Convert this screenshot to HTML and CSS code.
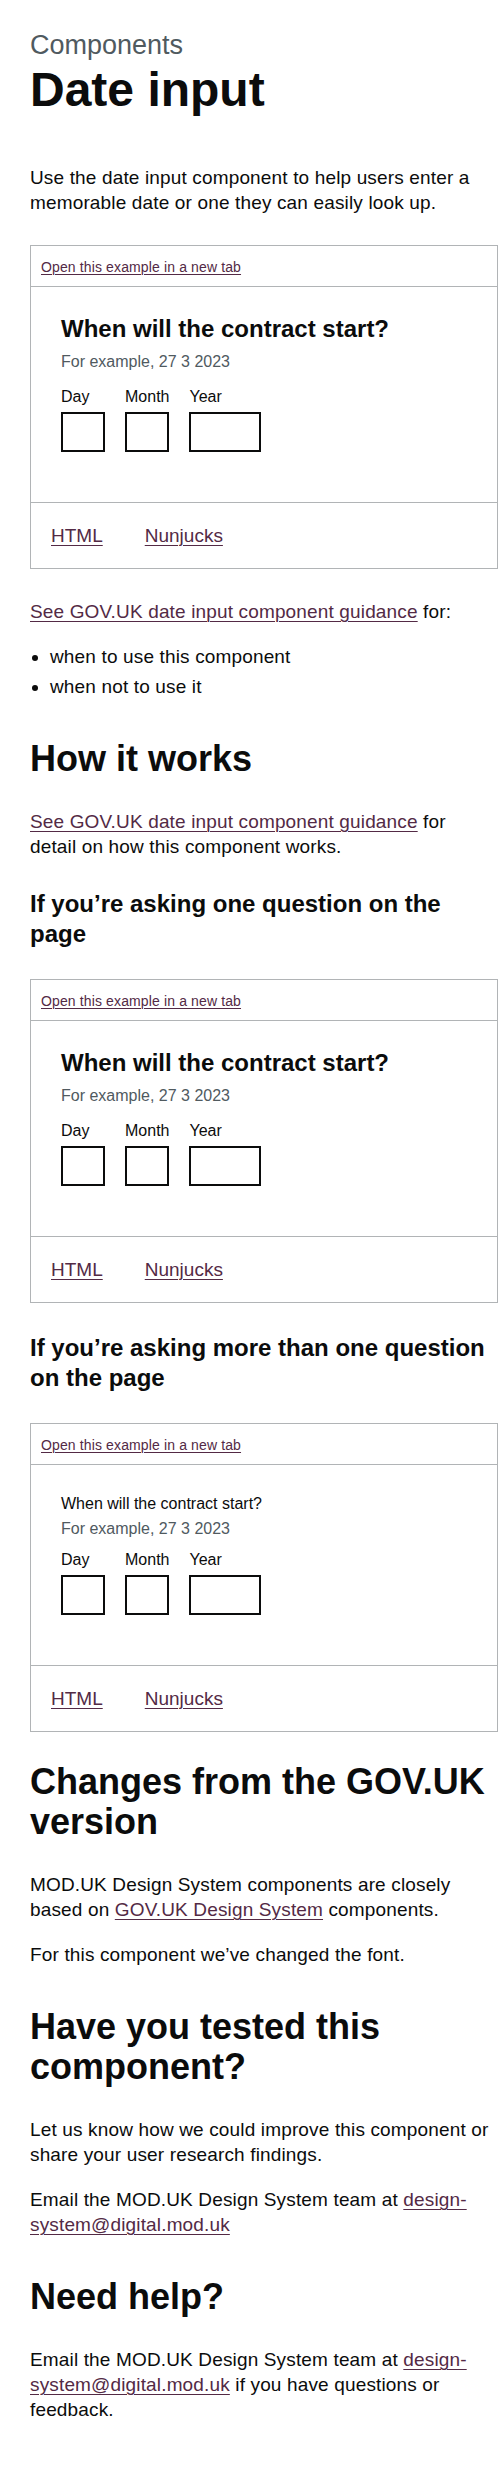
FILE: index.html
```html
<!DOCTYPE html>
<html lang="en">
<head>
<meta charset="utf-8">
<title>Date input</title>
<link rel="stylesheet" href="styles.css">
</head>
<body>
<main class="page">
  <span class="caption-xl">Components</span>
  <h1 class="heading-xl">Date input</h1>
  <p class="body">Use the date input component to help users enter a memorable date or one they can easily look up.</p>

  <div class="example">
    <div class="example__header"><a class="link link--small" href="#">Open this example in a new tab</a></div>
    <div class="example__frame">
      <fieldset class="fieldset">
        <legend class="legend legend--m">When will the contract start?</legend>
        <div class="hint">For example, 27 3 2023</div>
        <div class="date-input">
          <div class="date-input__item"><label class="label">Day</label><input class="input input--w2" type="text"></div>
          <div class="date-input__item"><label class="label">Month</label><input class="input input--w2" type="text"></div>
          <div class="date-input__item"><label class="label">Year</label><input class="input input--w4" type="text"></div>
        </div>
      </fieldset>
    </div>
    <div class="example__tabs"><a class="link" href="#">HTML</a><a class="link" href="#">Nunjucks</a></div>
  </div>

  <p class="body"><a class="link" href="#">See GOV.UK date input component guidance</a> for:</p>
  <ul class="list">
    <li>when to use this component</li>
    <li>when not to use it</li>
  </ul>

  <h2 class="heading-l">How it works</h2>
  <p class="body"><a class="link" href="#">See GOV.UK date input component guidance</a> for detail on how this component works.</p>

  <h3 class="heading-m">If you’re asking one question on the page</h3>
  <div class="example">
    <div class="example__header"><a class="link link--small" href="#">Open this example in a new tab</a></div>
    <div class="example__frame">
      <fieldset class="fieldset">
        <legend class="legend legend--m">When will the contract start?</legend>
        <div class="hint">For example, 27 3 2023</div>
        <div class="date-input">
          <div class="date-input__item"><label class="label">Day</label><input class="input input--w2" type="text"></div>
          <div class="date-input__item"><label class="label">Month</label><input class="input input--w2" type="text"></div>
          <div class="date-input__item"><label class="label">Year</label><input class="input input--w4" type="text"></div>
        </div>
      </fieldset>
    </div>
    <div class="example__tabs"><a class="link" href="#">HTML</a><a class="link" href="#">Nunjucks</a></div>
  </div>

  <h3 class="heading-m">If you’re asking more than one question on the page</h3>
  <div class="example">
    <div class="example__header"><a class="link link--small" href="#">Open this example in a new tab</a></div>
    <div class="example__frame">
      <fieldset class="fieldset">
        <legend class="legend legend--plain">When will the contract start?</legend>
        <div class="hint hint--tight">For example, 27 3 2023</div>
        <div class="date-input">
          <div class="date-input__item"><label class="label">Day</label><input class="input input--w2" type="text"></div>
          <div class="date-input__item"><label class="label">Month</label><input class="input input--w2" type="text"></div>
          <div class="date-input__item"><label class="label">Year</label><input class="input input--w4" type="text"></div>
        </div>
      </fieldset>
    </div>
    <div class="example__tabs"><a class="link" href="#">HTML</a><a class="link" href="#">Nunjucks</a></div>
  </div>

  <h2 class="heading-l heading-l--after-example">Changes from the GOV.UK version</h2>
  <p class="body">MOD.UK Design System components are closely based on <a class="link" href="#">GOV.UK Design System</a> components.</p>
  <p class="body">For this component we’ve changed the font.</p>

  <h2 class="heading-l">Have you tested this component?</h2>
  <p class="body">Let us know how we could improve this component or share your user research findings.</p>
  <p class="body">Email the MOD.UK Design System team at <a class="link" href="#">design-system@digital.mod.uk</a></p>

  <h2 class="heading-l">Need help?</h2>
  <p class="body">Email the MOD.UK Design System team at <a class="link" href="#">design-system@digital.mod.uk</a> if you have questions or feedback.</p>
</main>
</body>
</html>
```

FILE: styles.css
```css
* {
  box-sizing: border-box;
}

html,
body {
  margin: 0;
  padding: 0;
  background: #ffffff;
}

body {
  font-family: "Liberation Sans", Arial, sans-serif;
  color: #0b0c0c;
}

.page {
  display: block;
  width: 498px;
  padding: 30px 0 60px 30px;
}

.caption-xl {
  display: block;
  font-size: 27px;
  line-height: 30px;
  color: #505a5f;
  margin: 0 0 5px;
}

.heading-xl {
  font-size: 48px;
  line-height: 50px;
  font-weight: 700;
  margin: 0 0 50px;
}

.heading-l {
  font-size: 36px;
  line-height: 40px;
  font-weight: 700;
  margin: 40px 0 30px;
}

.heading-l--after-example {
  margin-top: 30px;
}

.heading-m {
  font-size: 24px;
  line-height: 30px;
  font-weight: 700;
  margin: 30px 0 20px;
}

.body {
  max-width: 464px;
  font-size: 19px;
  line-height: 25px;
  letter-spacing: 0.15px;
  margin: 0 0 20px;
}

.list {
  font-size: 19px;
  line-height: 25px;
  letter-spacing: 0.15px;
  margin: 0 0 20px;
  padding-left: 20px;
  list-style: disc;
}

.list li {
  margin-bottom: 5px;
}

.link {
  color: #532a45;
  text-decoration: underline;
  text-decoration-thickness: 1px;
  text-underline-offset: 0.1578em;
}

.link--small {
  font-size: 14px;
  line-height: 20px;
  letter-spacing: 0.13px;
}

/* Example box */
.example {
  margin: 30px 0;
  border: 1px solid #b1b4b6;
}

.example__header {
  padding: 11px 10px 9px;
  border-bottom: 1px solid #b1b4b6;
  line-height: 20px;
}

.example__frame {
  padding: 29px 30px 50px;
}

.example__tabs {
  display: flex;
  gap: 42px;
  padding: 20px 20px;
  border-top: 1px solid #b1b4b6;
  font-size: 19px;
  line-height: 25px;
}

/* Form content */
.fieldset {
  margin: 0;
  padding: 0;
  border: 0;
  min-width: 0;
}

.legend {
  padding: 0;
  display: block;
  color: #0b0c0c;
}

.legend--m {
  font-size: 24px;
  line-height: 26px;
  font-weight: 700;
  margin-bottom: 10px;
}

.legend--plain {
  font-size: 16px;
  line-height: 20px;
  font-weight: 400;
  margin-bottom: 5px;
}

.hint {
  font-size: 16px;
  line-height: 20px;
  color: #505a5f;
  margin-bottom: 15px;
}

.hint--tight {
  margin-bottom: 11px;
}

.date-input {
  display: flex;
  gap: 20px;
}

.date-input__item {
  display: flex;
  flex-direction: column;
  align-items: flex-start;
}

.label {
  display: block;
  font-size: 16px;
  line-height: 20px;
  margin-bottom: 5px;
  color: #0b0c0c;
}

.input {
  display: block;
  height: 40px;
  margin: 0;
  padding: 5px;
  border: 2px solid #0b0c0c;
  border-radius: 0;
  background: #ffffff;
  font-family: "Liberation Sans", Arial, sans-serif;
  font-size: 16px;
  -webkit-appearance: none;
  appearance: none;
}

.input--w2 {
  width: 44px;
}

.input--w4 {
  width: 72px;
}
```
